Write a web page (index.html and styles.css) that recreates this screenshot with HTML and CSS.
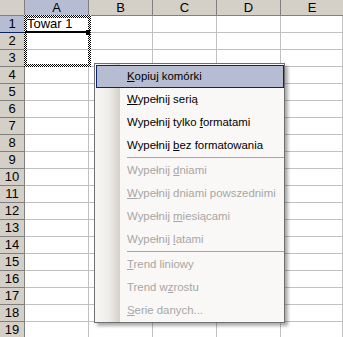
FILE: index.html
```html
<!DOCTYPE html>
<html>
<head>
<meta charset="utf-8">
<link rel="stylesheet" href="styles.css">
</head>
<body>
<div class="sheet">
  <div class="grid">
    <div class="corner"></div>
    <div class="ch ch-sel">A</div>
    <div class="ch">B</div>
    <div class="ch">C</div>
    <div class="ch">D</div>
    <div class="ch ch-last">E</div>

    <div class="rh rh-sel">1</div><div class="c c-text">Towar 1</div><div class="c"></div><div class="c"></div><div class="c"></div><div class="c"></div>
    <div class="rh">2</div><div class="c"></div><div class="c"></div><div class="c"></div><div class="c"></div><div class="c"></div>
    <div class="rh">3</div><div class="c"></div><div class="c"></div><div class="c"></div><div class="c"></div><div class="c"></div>
    <div class="rh">4</div><div class="c"></div><div class="c"></div><div class="c"></div><div class="c"></div><div class="c"></div>
    <div class="rh">5</div><div class="c"></div><div class="c"></div><div class="c"></div><div class="c"></div><div class="c"></div>
    <div class="rh">6</div><div class="c"></div><div class="c"></div><div class="c"></div><div class="c"></div><div class="c"></div>
    <div class="rh">7</div><div class="c"></div><div class="c"></div><div class="c"></div><div class="c"></div><div class="c"></div>
    <div class="rh">8</div><div class="c"></div><div class="c"></div><div class="c"></div><div class="c"></div><div class="c"></div>
    <div class="rh">9</div><div class="c"></div><div class="c"></div><div class="c"></div><div class="c"></div><div class="c"></div>
    <div class="rh">10</div><div class="c"></div><div class="c"></div><div class="c"></div><div class="c"></div><div class="c"></div>
    <div class="rh">11</div><div class="c"></div><div class="c"></div><div class="c"></div><div class="c"></div><div class="c"></div>
    <div class="rh">12</div><div class="c"></div><div class="c"></div><div class="c"></div><div class="c"></div><div class="c"></div>
    <div class="rh">13</div><div class="c"></div><div class="c"></div><div class="c"></div><div class="c"></div><div class="c"></div>
    <div class="rh">14</div><div class="c"></div><div class="c"></div><div class="c"></div><div class="c"></div><div class="c"></div>
    <div class="rh">15</div><div class="c"></div><div class="c"></div><div class="c"></div><div class="c"></div><div class="c"></div>
    <div class="rh">16</div><div class="c"></div><div class="c"></div><div class="c"></div><div class="c"></div><div class="c"></div>
    <div class="rh">17</div><div class="c"></div><div class="c"></div><div class="c"></div><div class="c"></div><div class="c"></div>
    <div class="rh">18</div><div class="c"></div><div class="c"></div><div class="c"></div><div class="c"></div><div class="c"></div>
    <div class="rh">19</div><div class="c"></div><div class="c"></div><div class="c"></div><div class="c"></div><div class="c"></div>
  </div>

  <div class="ants"></div>
  <div class="dragbar"></div>
  <div class="handle"></div>

  <div class="menu">
    <div class="item item-hot"><u>K</u>opiuj komórki</div>
    <div class="item"><u>W</u>ypełnij serią</div>
    <div class="item">Wypełnij tylko <u>f</u>ormatami</div>
    <div class="item">Wypełnij <u>b</u>ez formatowania</div>
    <div class="sep"></div>
    <div class="item item-off">Wypełnij <u>d</u>niami</div>
    <div class="item item-off"><u>W</u>ypełnij dniami powszednimi</div>
    <div class="item item-off">Wypełnij <u>m</u>iesiącami</div>
    <div class="item item-off">Wypełnij <u>l</u>atami</div>
    <div class="sep"></div>
    <div class="item item-off"><u>T</u>rend liniowy</div>
    <div class="item item-off">Trend w<u>z</u>rostu</div>
    <div class="item item-off"><u>S</u>erie danych...</div>
  </div>
</div>
</body>
</html>
```

FILE: styles.css
```css
html, body {
  margin: 0;
  padding: 0;
  background: #ffffff;
  overflow: hidden;
}

.sheet {
  position: relative;
  width: 343px;
  height: 337px;
  overflow: hidden;
  font-family: "Liberation Sans", Arial, sans-serif;
}

.grid {
  display: grid;
  grid-template-columns: 25px 64px 64px 64px 64px 1fr;
  grid-template-rows: 16px;
  grid-auto-rows: 17px;
}

.grid > div {
  box-sizing: border-box;
}

.corner {
  background: #d4d0c8;
  border-right: 1px solid #808080;
  border-bottom: 1px solid #808080;
}

.ch {
  background: #d4d0c8;
  border-right: 1px solid #808080;
  border-bottom: 1px solid #808080;
  font-size: 13px;
  color: #000;
  display: flex;
  align-items: center;
  justify-content: center;
  line-height: 15px;
}

.ch-sel {
  background: #b6bdd2;
  border-bottom-color: #0a246a;
}

.ch-last {
  border-right: none;
}

.rh {
  background: #d4d0c8;
  border-right: 1px solid #808080;
  border-bottom: 1px solid #808080;
  font-size: 13px;
  color: #000;
  display: flex;
  align-items: center;
  justify-content: center;
  line-height: 16px;
}

.rh-sel {
  background: #b6bdd2;
  border-right-color: #0a246a;
  border-bottom-color: #0a246a;
}

.c {
  background: #fff;
  border-right: 1px solid #c0c0c0;
  border-bottom: 1px solid #c0c0c0;
}

.c-text {
  font-size: 13px;
  line-height: 16px;
  padding-left: 2px;
  color: #000;
  white-space: nowrap;
}

/* marching ants around A1:A3 */
.ants {
  position: absolute;
  left: 24px;
  top: 15px;
  width: 67px;
  height: 52px;
  box-sizing: border-box;
  padding: 3px;
  background: repeating-conic-gradient(#000 0 25%, #fff 0 50%) 0 0 / 2px 2px;
  -webkit-mask: linear-gradient(#000 0 0) content-box, linear-gradient(#000 0 0);
  -webkit-mask-composite: xor;
  mask-composite: exclude;
}

.dragbar {
  position: absolute;
  left: 25px;
  top: 31px;
  width: 62px;
  height: 2px;
  background: #000;
}

.handle {
  position: absolute;
  left: 86px;
  top: 30px;
  width: 4px;
  height: 5px;
  background: #000;
}

/* context menu */
.menu {
  position: absolute;
  left: 94px;
  top: 63px;
  width: 191px;
  box-sizing: border-box;
  border: 1px solid #6f6f6f;
  padding: 1px 0 0 1px;
  background:
    linear-gradient(to right, #f8f7f5 0%, #efede9 55%, #d4d0c8 100%) 0 0 / 25px 100% no-repeat,
    #f9f8f7;
  box-shadow: 3px 3px 3px rgba(0, 0, 0, 0.32);
  font-family: "Liberation Sans", Tahoma, sans-serif;
  font-size: 11.4px;
}

.item {
  height: 23px;
  line-height: 23px;
  padding-left: 31px;
  box-sizing: border-box;
  color: #000;
  white-space: nowrap;
}

.item u {
  text-decoration: underline;
  text-underline-offset: 1px;
}

.item-hot {
  background: #b6bdd2;
  border: 1px solid #0a246a;
  line-height: 21px;
  padding-left: 30px;
}

.item-off {
  color: #a7a6a4;
}

.sep {
  height: 2px;
  margin-left: 31px;
  border-top: 1px solid #a6a6a6;
  box-sizing: border-box;
}
```
